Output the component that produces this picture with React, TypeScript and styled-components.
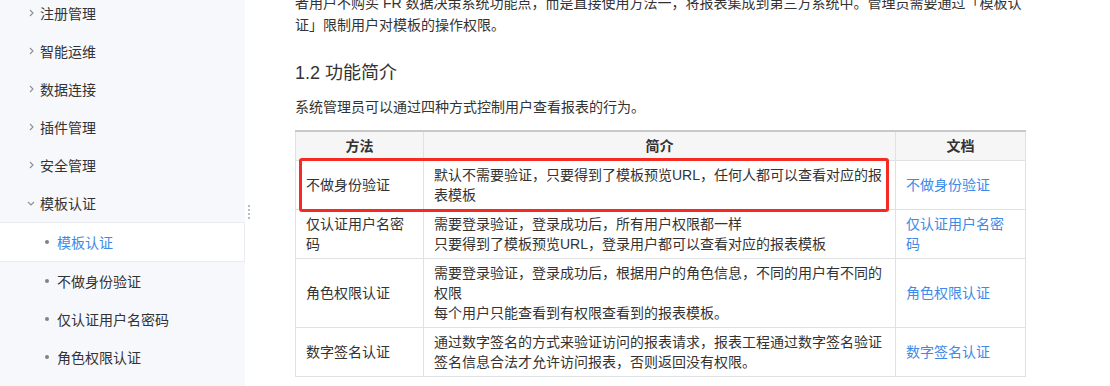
import React from 'react';
import styled, { createGlobalStyle } from 'styled-components';

const GlobalStyle = createGlobalStyle`
  html, body {
    margin: 0;
    padding: 0;
    background: #fff;
  }
  body {
    font-family: "Liberation Sans", "Noto Sans CJK SC", sans-serif;
    font-size: 14px;
    color: #333;
  }
`;

const Page = styled.div`
  display: flex;
  width: 1110px;
  height: 386px;
  overflow: hidden;
`;

const Sidebar = styled.aside`
  position: relative;
  flex: 0 0 245px;
  background: #f7f8fc;
`;

const NavList = styled.ul`
  list-style: none;
  margin: -6px 0 0;
  padding: 0;
`;

const NavItem = styled.li<{ $sub?: boolean; $active?: boolean }>`
  display: flex;
  align-items: center;
  box-sizing: border-box;
  height: ${(p) => (p.$active ? '40px' : '38px')};
  padding-left: ${(p) => (p.$sub ? '45px' : '27px')};
  color: ${(p) => (p.$active ? '#3d8ae8' : '#333')};
  background: ${(p) => (p.$active ? '#fff' : 'transparent')};
  border: ${(p) => (p.$active ? '1px solid #e9ebf0' : 'none')};
  border-left: none;
  cursor: pointer;
`;

const Arrow = styled.span`
  display: inline-flex;
  width: 8px;
  height: 10px;
  margin-right: 5px;
  align-items: center;
  justify-content: center;
  color: #8a8f99;
`;

const Bullet = styled.span`
  width: 4px;
  height: 4px;
  border-radius: 50%;
  background: #7d828c;
  margin-right: 8px;
`;

const Resizer = styled.div`
  position: absolute;
  right: -5px;
  top: 205px;
  display: flex;
  flex-direction: column;
  gap: 2px;
`;

const Dot = styled.span`
  width: 2px;
  height: 2px;
  background: #b6bcc8;
`;

const Main = styled.main`
  flex: 1;
  padding-left: 50px;
`;

const Content = styled.div`
  width: 730px;
  margin-top: -8px;
`;

const Para = styled.p`
  margin: 0;
  line-height: 22px;
  color: #333;
`;

const Heading = styled.h2`
  margin: 24px 0 10px;
  font-size: 18px;
  font-weight: normal;
  line-height: 26px;
  color: #333;
`;

const TableWrap = styled.div`
  position: relative;
  margin-top: 12px;
`;

const Table = styled.table`
  width: 730px;
  border-collapse: collapse;
  border-top: 2px solid #c9c9c9;
  table-layout: fixed;
`;

const Th = styled.th`
  background: #f6f6f6;
  border: 1px solid #dfe2e5;
  border-top: none;
  padding: 4px 10px;
  line-height: 20px;
  font-weight: bold;
  text-align: center;
  color: #333;
`;

const Td = styled.td`
  border: 1px solid #dfe2e5;
  padding: 4px 10px;
  line-height: 20px;
  vertical-align: middle;
  color: #333;
`;

const DocLink = styled.a`
  color: #3d8ae8;
  text-decoration: none;
`;

const Highlight = styled.div`
  position: absolute;
  left: 4px;
  top: 28px;
  width: 590px;
  height: 54px;
  box-sizing: border-box;
  border: 3px solid #f52a22;
  border-radius: 3px;
  pointer-events: none;
`;

const ChevronRight = () => (
  <svg width="5" height="8" viewBox="0 0 5 8">
    <path d="M1 1l3 3-3 3" fill="none" stroke="currentColor" strokeWidth="1.1" />
  </svg>
);

const ChevronDown = () => (
  <svg width="8" height="5" viewBox="0 0 8 5">
    <path d="M1 1l3 3 3-3" fill="none" stroke="currentColor" strokeWidth="1.1" />
  </svg>
);

const groups = ['注册管理', '智能运维', '数据连接', '插件管理', '安全管理'];
const subs = ['模板认证', '不做身份验证', '仅认证用户名密码', '角色权限认证'];

const rows = [
  {
    method: '不做身份验证',
    intro: ['默认不需要验证，只要得到了模板预览URL，任何人都可以查看对应的报表模板'],
    doc: '不做身份验证',
  },
  {
    method: '仅认证用户名密码',
    intro: ['需要登录验证，登录成功后，所有用户权限都一样', '只要得到了模板预览URL，登录用户都可以查看对应的报表模板'],
    doc: '仅认证用户名密码',
  },
  {
    method: '角色权限认证',
    intro: ['需要登录验证，登录成功后，根据用户的角色信息，不同的用户有不同的权限', '每个用户只能查看到有权限查看到的报表模板。'],
    doc: '角色权限认证',
  },
  {
    method: '数字签名认证',
    intro: ['通过数字签名的方式来验证访问的报表请求，报表工程通过数字签名验证签名信息合法才允许访问报表，否则返回没有权限。'],
    doc: '数字签名认证',
  },
];

export default function App() {
  return (
    <Page>
      <GlobalStyle />
      <Sidebar>
        <NavList>
          {groups.map((g) => (
            <NavItem key={g}>
              <Arrow>
                <ChevronRight />
              </Arrow>
              {g}
            </NavItem>
          ))}
          <NavItem>
            <Arrow>
              <ChevronDown />
            </Arrow>
            模板认证
          </NavItem>
          {subs.map((s, i) => (
            <NavItem key={s} $sub $active={i === 0}>
              <Bullet />
              {s}
            </NavItem>
          ))}
        </NavList>
        <Resizer>
          <Dot />
          <Dot />
          <Dot />
          <Dot />
        </Resizer>
      </Sidebar>
      <Main>
        <Content>
          <Para>
            者用户不购买 FR 数据决策系统功能点，而是直接使用方法一，将报表集成到第三方系统中。管理员需要通过「模板认证」限制用户对模板的操作权限。
          </Para>
          <Heading>1.2 功能简介</Heading>
          <Para>系统管理员可以通过四种方式控制用户查看报表的行为。</Para>
          <TableWrap>
            <Table>
              <colgroup>
                <col style={{ width: 128 }} />
                <col style={{ width: 472 }} />
                <col style={{ width: 130 }} />
              </colgroup>
              <thead>
                <tr>
                  <Th>方法</Th>
                  <Th>简介</Th>
                  <Th>文档</Th>
                </tr>
              </thead>
              <tbody>
                {rows.map((r) => (
                  <tr key={r.method}>
                    <Td>{r.method}</Td>
                    <Td>
                      {r.intro.map((line, i) => (
                        <React.Fragment key={i}>
                          {i > 0 && <br />}
                          {line}
                        </React.Fragment>
                      ))}
                    </Td>
                    <Td>
                      <DocLink href="#">{r.doc}</DocLink>
                    </Td>
                  </tr>
                ))}
              </tbody>
            </Table>
            <Highlight />
          </TableWrap>
        </Content>
      </Main>
    </Page>
  );
}
